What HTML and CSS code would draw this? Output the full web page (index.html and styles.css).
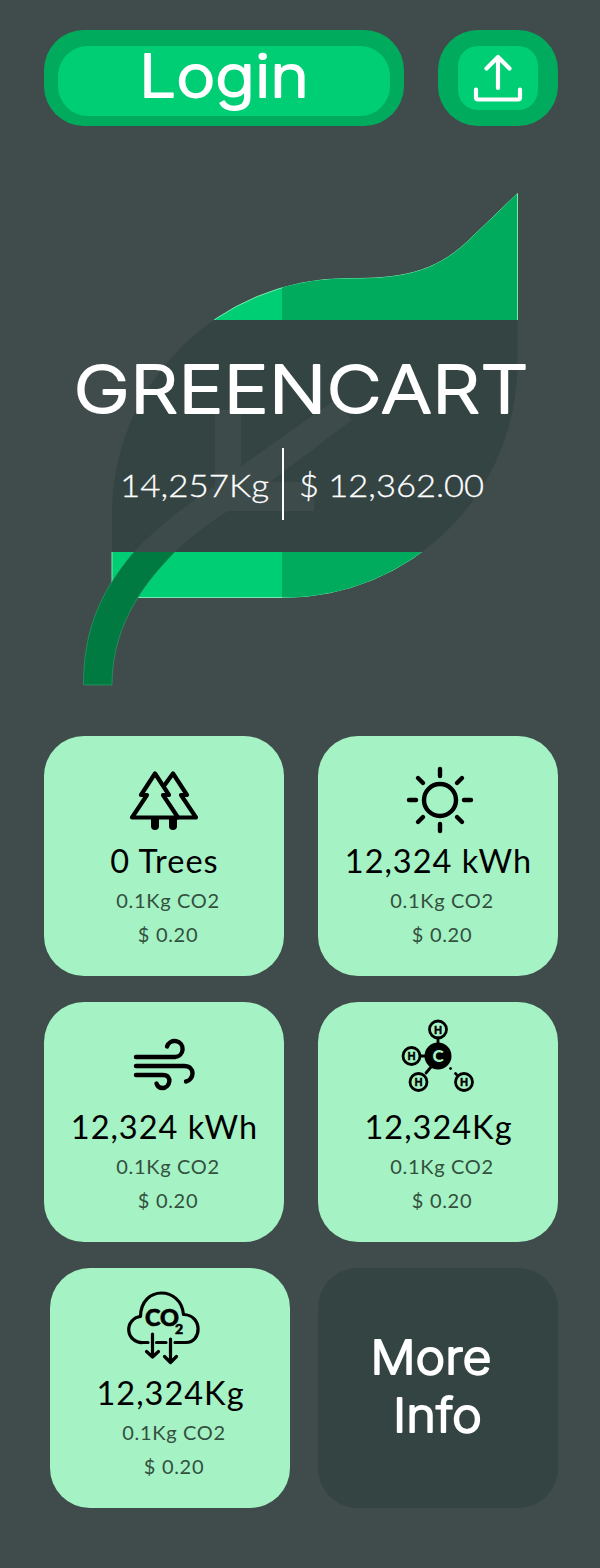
FILE: index.html
```html
<!DOCTYPE html>
<html lang="en">
<head>
<meta charset="utf-8">
<title>Greencart</title>
<link rel="stylesheet" href="styles.css">
</head>
<body>
<main class="page">
  <header class="actions">
    <button class="btn btn-login"><span class="btn-face"><svg class="face-art" viewBox="58 46 332 70"><text class="round-text" x="139" y="97" font-size="59" textLength="170" lengthAdjust="spacingAndGlyphs">Login</text></svg></span></button>
    <button class="btn btn-upload" aria-label="Upload"><span class="btn-face"><svg class="face-art upload-icon" viewBox="458 46 80 64"><path d="M498 88V57M486.500 68.500L498 57L509.500 68.500M476 89.500V97.500Q476 99.500 478 99.500H518Q520 99.500 520 97.500V89.500"/></svg></span></button>
  </header>

  <svg class="hero" viewBox="44 186 514 510">
    <defs>
      <path id="leaf" d="M517.500 193.500V363A234.500 234.500 0 0 1 283 597.500H112V514A235.500 235.500 0 0 1 347 278.500C400 279 434 273 467 242Z"/>
      <path id="stem" d="M83.500 685C83.500 632 99 594 132 554C160 524 185 506 215 486V410H241V466L335 400L352 420L270 482H314V511H228Q198 530 175 552C150 578 112 620 112 685Z"/>
      <clipPath id="leaf-clip"><use href="#leaf"/></clipPath>
      <clipPath id="ends"><path d="M44 186H558V320H44ZM44 552H558V696H44Z"/></clipPath>
      <clipPath id="band"><path d="M44 320H558V552H44Z"/></clipPath>
    </defs>
    <g clip-path="url(#ends)">
      <use href="#leaf" class="leaf-light leaf-edge"/>
      <path class="leaf-dark" clip-path="url(#leaf-clip)" d="M282 186H517V598H282Z"/>
      <use href="#stem" class="leaf-stem leaf-edge-stem"/>
    </g>
    <g clip-path="url(#band)">
      <use href="#leaf" class="shade"/>
      <use href="#stem" class="shade-stem"/>
    </g>
    <text class="round-text" x="73.500" y="413" font-size="66" textLength="455" lengthAdjust="spacingAndGlyphs">GREENCART</text>
    <path class="divider" d="M283 448V520"/>
    <text class="figure" x="120" y="496.500" textLength="149" lengthAdjust="spacingAndGlyphs">14,257Kg</text>
    <text class="figure" x="299" y="496.500" textLength="185" lengthAdjust="spacingAndGlyphs">$ 12,362.00</text>
  </svg>

  <section class="cards">
    <article class="card">
      <svg class="icon" viewBox="124 760 80 80"><g class="line tree"><path d="M155 773.500L169 795H163L178 817.500H132L147 795H141Z"/><path d="M165 784.500L173 773.500L187 795H181L196 817.500H178"/></g><path d="M151 817H159V826Q159 830 155 830T151 826ZM169 817H177V826Q177 830 173 830T169 826Z"/></svg>
      <h2 class="title">0 Trees</h2>
      <p class="sub">0.1Kg CO2</p>
      <p class="sub">$ 0.20</p>
    </article>
    <article class="card">
      <svg class="icon" viewBox="400 760 80 80"><g class="line"><circle cx="440" cy="800" r="16"/><path d="M440 769V776M440 824V831M409 800H416M464 800H471M418 778L423 783M457 817L462 822M462 778L457 783M423 817L418 822"/></g></svg>
      <h2 class="title">12,324 kWh</h2>
      <p class="sub">0.1Kg CO2</p>
      <p class="sub">$ 0.20</p>
    </article>
    <article class="card">
      <svg class="icon" viewBox="124 1026 80 80"><path class="line" d="M136 1057H175A8 8 0 1 0 167 1046.500M136 1066H184C196 1066 194 1080 186 1081.500M136 1075H163C173 1075 170 1088 162.500 1088Q158 1088 156.500 1083.500"/></svg>
      <h2 class="title">12,324 kWh</h2>
      <p class="sub">0.1Kg CO2</p>
      <p class="sub">$ 0.20</p>
    </article>
    <article class="card">
      <svg class="icon" viewBox="398 1016 80 80"><g class="line bond"><path d="M438 1038V1044M421 1056H426M426 1073L431 1067M456.500 1074.500L455.500 1073.500M450.500 1068.500L450.600 1068.600"/><circle cx="438" cy="1029.500" r="8.500"/><circle cx="411.500" cy="1056" r="8.500"/><circle cx="418.500" cy="1082" r="8.500"/><circle cx="464" cy="1082" r="8.500"/></g><circle cx="438" cy="1056" r="13.500"/><g class="atom"><text x="438" y="1033.500">H</text><text x="411.500" y="1060">H</text><text x="418.500" y="1086">H</text><text x="464" y="1086">H</text><text class="carbon" x="438" y="1062">C</text></g></svg>
      <h2 class="title">12,324Kg</h2>
      <p class="sub">0.1Kg CO2</p>
      <p class="sub">$ 0.20</p>
    </article>
    <article class="card card-shifted">
      <svg class="icon" viewBox="124 1288 80 80"><g class="line cloud"><path d="M148 1342.500H143A13 13 0 0 1 140.500 1316.500C141 1285 181 1286 183.500 1314.500C203 1315 202 1342.500 186 1342.500H175M156.500 1342.500H166"/><path d="M152.500 1334V1356M146.500 1351.500L152.500 1357L158.500 1351.500M170.500 1339V1362M164.500 1356.500L170.500 1362.500L176.500 1356.500"/></g><text class="co" x="145" y="1326" textLength="34" lengthAdjust="spacingAndGlyphs">CO</text><text class="co two" x="175" y="1333.500">2</text></svg>
      <h2 class="title">12,324Kg</h2>
      <p class="sub">0.1Kg CO2</p>
      <p class="sub">$ 0.20</p>
    </article>
    <a class="card card-more" href="#"><svg class="more-label" viewBox="318 1268 240 240"><text class="round-text" font-size="46.500" x="370.500" y="1374" textLength="121" lengthAdjust="spacingAndGlyphs">More</text><text class="round-text" font-size="46.500" x="393" y="1432" textLength="89" lengthAdjust="spacingAndGlyphs">Info</text></svg></a>
  </section>
</main>
</body>
</html>
```
FILE: styles.css
```css
* { box-sizing: border-box; margin: 0; }

body {
  background: #3f4c4b;
  font-family: Lato, "Open Sans", sans-serif;
  color: #000;
}

.page {
  width: 600px;
  height: 1568px;
  padding: 30px 42px 60px 44px;
  display: flex;
  flex-direction: column;
}

svg { display: block; }

.actions {
  display: flex;
  justify-content: space-between;
  height: 96px;
}

.btn {
  border: 0;
  border-radius: 40px;
  background: #00ab5e;
  display: block;
}
.btn-login { width: 360px; padding: 16px 14px 10px; }
.btn-upload { width: 120px; padding: 16px 20px; }
.btn-face {
  display: block;
  height: 100%;
  border-radius: 30px;
  background: #00ce74;
}
.btn-upload .btn-face { border-radius: 20px; }
.face-art { width: 100%; height: 100%; overflow: visible; }
.upload-icon {
  fill: none;
  stroke: #fff;
  stroke-width: 4.2;
  stroke-linecap: round;
  stroke-linejoin: round;
}

.round-text {
  fill: #fff;
  stroke: #fff;
  stroke-width: 1.8;
  stroke-linejoin: round;
  font-family: Inter, sans-serif;
  font-weight: 300;
}

.hero {
  width: 514px;
  height: 510px;
  margin-top: 60px;
  flex: none;
}
.leaf-light { fill: #00ce74; }
.leaf-dark { fill: #00ab5e; }
.leaf-stem { fill: #007a40; }
.leaf-edge { stroke: #7ee6b0; stroke-width: 1; }
.leaf-edge-stem { stroke: #2fa56c; stroke-width: .6; }
.shade { fill: #334443; }
.shade-stem { fill: #3d4b4a; }
.divider { stroke: #fff; stroke-width: 2; }
.figure {
  fill: #fff;
  stroke: #fff;
  stroke-width: .3;
  font-size: 32px;
  font-weight: 300;
}

.cards {
  margin-top: 40px;
  display: grid;
  grid-template-columns: 240px 240px;
  gap: 26px 34px;
}
.card {
  height: 240px;
  border-radius: 40px;
  background: #a5f2c4;
  display: flex;
  flex-direction: column;
  align-items: center;
}
.card-shifted { position: relative; left: 6px; }
.icon {
  width: 80px;
  height: 80px;
  margin-top: 24px;
  flex: none;
}
.card:nth-child(2) .icon { margin-left: 4px; }
.card:nth-child(4) .icon { margin: 14px 0 10px; }
.card:nth-child(5) .icon { margin: 20px 12px 4px 0; }

.line {
  fill: none;
  stroke: #000;
  stroke-width: 4.4;
  stroke-linecap: round;
  stroke-linejoin: round;
}
.tree { stroke-width: 4.2; }
.bond { stroke-width: 2.8; }
.cloud { stroke-width: 3.2; }
.atom text {
  font-size: 10.5px;
  font-weight: 900;
  text-anchor: middle;
  stroke: #000;
  stroke-width: .4;
}
.atom .carbon { font-size: 17px; fill: #a5f2c4; stroke: none; }
.co { font-size: 22px; font-weight: 900; stroke: #000; stroke-width: .6; }
.two { font-size: 14px; }

.title {
  font-size: 32.5px;
  font-weight: 400;
  line-height: 40px;
  height: 40px;
  margin-top: 1px;
  letter-spacing: 1px;
  margin-left: 1px;
  white-space: nowrap;
}
.sub {
  font-size: 20px;
  line-height: 34px;
  color: #33503e;
  letter-spacing: .7px;
  margin-left: 8px;
  white-space: nowrap;
}
.title + .sub { margin-top: 2px; }

.card-more { background: #334443; }
.more-label { width: 240px; height: 240px; }
```
